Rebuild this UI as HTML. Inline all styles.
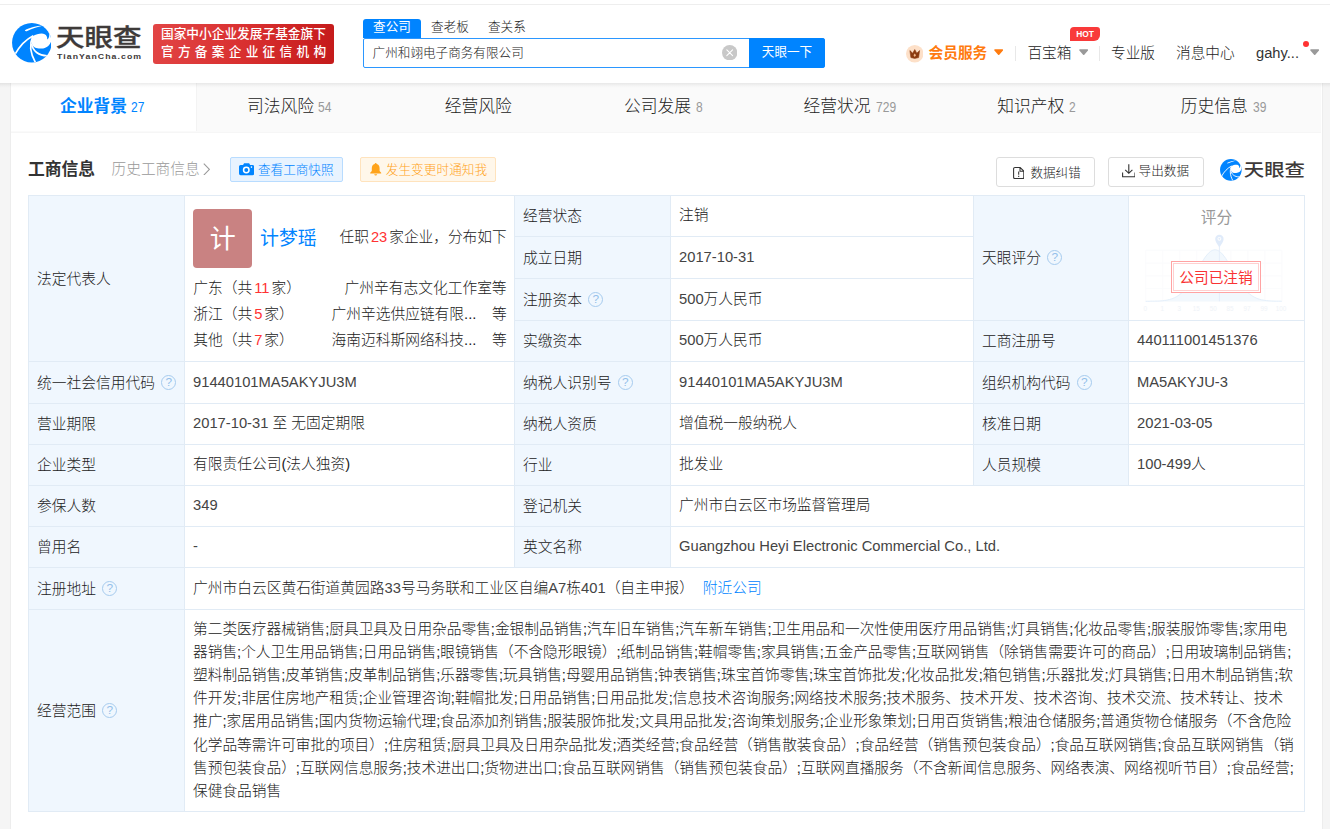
<!DOCTYPE html>
<html lang="zh-CN">
<head>
<meta charset="utf-8">
<title>广州和翊电子商务有限公司 - 天眼查</title>
<style>
*{box-sizing:border-box;margin:0;padding:0}
html,body{width:1330px;height:829px;overflow:hidden;background:#f5f5f5}
body{font-family:"Liberation Sans","Noto Sans CJK SC",sans-serif;font-size:14.68px;font-weight:300;color:#222;position:relative}
.abs{position:absolute}
/* header */
#topline{left:0;top:0;width:1330px;height:4px;background:#fff}
#topline2{left:0;top:4px;width:1330px;height:1px;background:#eee}
#header{left:0;top:5px;width:1330px;height:78px;background:#fff}
#hshadow{left:0;top:83px;width:1330px;height:5px;background:linear-gradient(rgba(0,0,0,.075),rgba(0,0,0,.02) 60%,rgba(0,0,0,0))}
#logo{left:11.6px;top:23.44px;width:39.63px;height:39.63px}
#logotxt{left:56px;top:22.6px;font-size:28px;font-weight:500;-webkit-text-stroke:.4px #3e3a39;color:#3e3a39;line-height:36px;white-space:nowrap;transform-origin:0 0;transform:scale(1.018,.85)}
#logosub{left:57.3px;top:50.6px;font-size:7.6px;font-weight:bold;color:#3e3a39;line-height:12px;letter-spacing:.93px;white-space:nowrap;transform-origin:0 0;transform:scaleX(1.15)}
#banner{left:153px;top:24px;width:181px;height:40px;border-radius:3px;background:linear-gradient(100deg,#e24545 0%,#d93030 50%,#c41a1a 100%);color:#fff;font-weight:500;font-size:12.7px;line-height:18px;padding:.7px 0 0 8px;white-space:nowrap}
#banner .l1{letter-spacing:0;display:block}
#banner .l2{letter-spacing:4.25px;display:block}
.stab{top:18.8px;height:19px;line-height:17.4px;font-size:12.6px;color:#222;white-space:nowrap}
#stab1{left:363px;width:58px;background:#0084ff;color:#fff;font-weight:400;text-align:center;border-radius:3px 3px 0 0}
#sinput{left:363px;top:37.7px;width:462px;height:30.8px;border:1px solid #2b97ff;background:#fff;border-radius:2px}
#sinput .t{position:absolute;left:8.6px;top:0;line-height:28.6px;font-size:12.6px;color:#222;white-space:nowrap}
#sbtn{left:749px;top:37.7px;width:76px;height:30.8px;background:#0084ff;color:#fff;font-weight:400;font-size:12.6px;line-height:29.4px;text-align:center;border-radius:0 3px 3px 0}
#sclear{left:722.1px;top:44.7px;width:15.4px;height:15.4px}
.nav{top:42px;height:22px;line-height:22px;font-size:14.68px;color:#222;white-space:nowrap}
.sep{top:45.6px;width:1px;height:15px;background:#e8e8e8}
#hot{left:1070px;top:26.9px;width:30.1px;height:14.6px;background:#f93a3a;color:#fff;font-size:8.4px;font-weight:bold;line-height:15.2px;text-align:center;border-radius:4px 3px 6px 0}
/* tabs */
#wrap{left:10.2px;top:83px;width:1313.2px;height:746px;background:#fff;border-left:1px solid #ededed;border-right:1px solid #ededed}
#tabs{left:11.2px;top:83px;width:1310.2px;height:49.6px;background:#fafafa;border-bottom:1.6px solid #f6f6f6}
#tab1bg{left:11.2px;top:83px;width:186px;height:48px;background:#fff;border-right:1px solid #f3f3f3}
.tl{top:95.2px;height:24px;line-height:24px;font-size:16.78px;color:#222;white-space:nowrap}
.tl.on{color:#0084ff;font-weight:bold}
.tc{top:95px;height:24px;line-height:24px;font-size:14px;color:#999;white-space:nowrap;transform:scaleX(.86);transform-origin:0 0}
.tc.on{color:#0084ff}
/* section head */
#sh1{left:28px;top:158.2px;font-size:16.78px;font-weight:bold;color:#333;line-height:24px;white-space:nowrap}
#sh2{left:111.6px;top:157.7px;font-size:14.68px;color:#999;line-height:22px;white-space:nowrap}
.btn{height:24.3px;line-height:22.6px;font-size:12.6px;border:1px solid;border-radius:2px;white-space:nowrap;text-align:left}
#b1{left:230.2px;top:157.3px;width:112.4px;color:#0084ff;border-color:#b8dcff;background:#e8f3ff}
#b2{left:360.3px;top:157.3px;width:135.7px;color:#ffa31a;border-color:#ffe3bd;background:#fff7ea}
#b3{left:996px;top:157px;width:99px;height:29.8px;line-height:28.6px;color:#222;border-color:#ddd;background:#fff;border-radius:3px}
#b4{left:1108px;top:157px;width:95.7px;height:29.8px;line-height:28.6px;color:#222;border-color:#ddd;background:#fff;border-radius:3px}
#wmtxt{left:1243.8px;top:158.6px;font-size:20.4px;font-weight:500;color:#3e3a39;line-height:26px;white-space:nowrap;transform-origin:0 0;transform:scale(1.0,.86)}
/* table */
.c{position:absolute;border:1px solid #e1ebf5;background:#fff;padding:0 8px;white-space:nowrap;overflow:hidden;display:flex;align-items:center;font-size:14.74px;color:#222;line-height:22px}
.c.k{background:#f0f7fe}
.m{display:block;position:relative}
.c:not(.k) .m{top:-.8px}
.c .m.lat{color:#444;top:-.9px}
.lt{color:#444}
.legal{display:block}
.av{position:absolute;left:8.1px;top:12.9px;width:59.1px;height:59px;border-radius:4px;background:#c98282;color:#fff;font-size:26px;font-weight:400;line-height:61px;text-align:center}
.nm{position:absolute;left:75px;top:28.6px;font-size:18.9px;font-weight:400;line-height:28px}
.job{position:absolute;right:7.4px;top:29.6px;font-size:14.68px;line-height:22px}
.n{margin:0 2px}
.ll{position:absolute;left:8.2px;right:7.4px;height:22px;line-height:22px}
.ll .r{position:absolute;right:0;top:0}
.ll .co{position:absolute;left:138.3px;top:0}
b{font-weight:inherit}
.score{display:block;padding:0}
.sct{position:absolute;left:0;right:0;top:10.6px;text-align:center;font-size:15.7px;font-weight:400;color:#999;line-height:22px}
.stamp{position:absolute;left:42.2px;top:65.2px;width:89.7px;height:31.9px;border:1px solid #ffa3a3;background:#fff;padding:1.2px}
.stamp span{display:block;width:100%;height:100%;border:1px solid #ffd0d0;font-weight:400;color:#f93333;font-size:14.68px;line-height:28.6px;text-align:center}
.scope{white-space:nowrap;font-size:14.7px;line-height:23.17px;position:relative;top:-.1px}
.q{display:inline-block;width:15.2px;height:15.2px;border:1.2px solid #a6cbee;border-radius:50%;color:#93bfea;font-size:11.8px;line-height:13.4px;text-align:center;vertical-align:middle;position:relative;top:-1.3px;margin-left:6.2px}
.red{color:#f33}
a{color:#0084ff;text-decoration:none}
</style>
</head>
<body>
<div class="abs" id="topline"></div><div class="abs" id="topline2"></div>
<div class="abs" id="header"></div>
<svg class="abs" id="logo" viewBox="48 45 730 730"><defs><clipPath id="lc"><circle cx="413" cy="410" r="364"/></clipPath></defs>
<circle cx="413" cy="410" r="364" fill="#0084ff"/>
<g clip-path="url(#lc)" fill="#fff" stroke="none">
<path d="M435,285 C500,245 600,225 650,250 C690,270 700,310 696,345 L706,345 C725,320 738,290 733,255 C728,220 712,185 688,158 L760,100 L820,240 L820,375 L772,370 C755,440 690,510 590,515 C540,517 500,510 468,498 C430,470 405,420 410,380 C412,345 420,315 435,285 Z"/>
<path d="M284,180 C370,128 500,96 615,95 C520,118 400,155 328,192 C310,200 290,196 284,180 Z"/>
<g fill="none" stroke="#fff" stroke-width="31"><path d="M105,620 C180,480 300,350 440,278"/><path d="M432,285 C370,420 385,600 478,770"/><path d="M410,430 C430,560 540,650 700,648"/></g>
</g></svg>
<div class="abs" id="logotxt">天眼查</div>
<div class="abs" id="logosub">TianYanCha.com</div>
<div class="abs" id="banner"><span class="l1">国家中小企业发展子基金旗下</span><span class="l2">官方备案企业征信机构</span></div>
<div class="abs stab" id="stab1">查公司</div>
<div class="abs stab" style="left:431px">查老板</div>
<div class="abs stab" style="left:488px">查关系</div>
<div class="abs" id="sinput"><span class="t">广州和翊电子商务有限公司</span></div>
<svg class="abs" id="sclear" viewBox="0 0 16 16"><circle cx="8" cy="8" r="8" fill="#c8c8c8"/><path d="M5 5L11 11M11 5L5 11" stroke="#fff" stroke-width="1.1" stroke-linecap="round"/></svg>
<div class="abs" id="sbtn">天眼一下</div>
<svg class="abs" style="left:905.7px;top:45.1px;width:17.5px;height:17.5px" viewBox="0 0 17.5 17.5"><circle cx="8.75" cy="8.75" r="8.75" fill="#fde0c8"/><path d="M3.9 5.6L6.7 8.2L8.75 4.6L10.8 8.2L13.6 5.6L12.6 12.6Q8.75 14.2 4.9 12.6Z" fill="#8b3a10" stroke="#8b3a10" stroke-width=".6" stroke-linejoin="round"/><path d="M8.75 8.6L10 10.3L8.75 12L7.5 10.3Z" fill="#f3b98c"/></svg>
<div class="abs nav" style="left:928.6px;color:#ff7b0f;font-weight:bold">会员服务</div>
<svg class="abs" style="left:994.1px;top:49.2px;width:9.4px;height:6.2px" viewBox="0 0 9.4 6.2"><path d="M1 1H8.4L4.7 5.2Z" fill="#ff7b0f" stroke="#ff7b0f" stroke-width="1.6" stroke-linejoin="round"/></svg>
<div class="abs sep" style="left:1015px"></div>
<div class="abs nav" style="left:1027.4px">百宝箱</div>
<svg class="abs" style="left:1078.7px;top:49.2px;width:9.4px;height:6.2px" viewBox="0 0 9.4 6.2"><path d="M1 1H8.4L4.7 5.2Z" fill="#999" stroke="#999" stroke-width="1.6" stroke-linejoin="round"/></svg>
<div class="abs" id="hot">HOT</div>
<div class="abs sep" style="left:1099px"></div>
<div class="abs nav" style="left:1111px">专业版</div>
<div class="abs nav" style="left:1176px">消息中心</div>
<div class="abs nav" style="left:1256px;color:#333">gahy...</div>
<div class="abs" style="left:1302.8px;top:40.8px;width:6.2px;height:6.2px;border-radius:50%;background:#f33"></div>
<svg class="abs" style="left:1309.5px;top:49.2px;width:9.4px;height:6.2px" viewBox="0 0 9.4 6.2"><path d="M1 1H8.4L4.7 5.2Z" fill="#999" stroke="#999" stroke-width="1.6" stroke-linejoin="round"/></svg>
<div class="abs" id="wrap"></div>
<div class="abs" id="tabs"></div>
<div class="abs" id="tab1bg"></div>
<div class="abs tl on" style="left:59.9px">企业背景</div><div class="abs tc on" style="left:131.3px">27</div>
<div class="abs tl" style="left:246.9px">司法风险</div><div class="abs tc" style="left:317.9px">54</div>
<div class="abs tl" style="left:444.7px">经营风险</div>
<div class="abs tl" style="left:623.9px">公司发展</div><div class="abs tc" style="left:695.6px">8</div>
<div class="abs tl" style="left:803.5px">经营状况</div><div class="abs tc" style="left:875.6px">729</div>
<div class="abs tl" style="left:997.2px">知识产权</div><div class="abs tc" style="left:1069.4px">2</div>
<div class="abs tl" style="left:1180.7px">历史信息</div><div class="abs tc" style="left:1252.9px">39</div>
<div class="abs" id="sh1">工商信息</div>
<div class="abs" id="sh2">历史工商信息</div>
<svg class="abs" style="left:203px;top:162.6px;width:7.4px;height:12.8px" viewBox="0 0 7.4 12.8"><path d="M.8 .7L6.4 6.4L.8 12.1" fill="none" stroke="#999" stroke-width="1.1"/></svg>
<div class="abs btn" id="b1"><svg viewBox="0 0 15 12" style="position:absolute;left:8px;top:5.2px;width:15.2px;height:12.2px"><path d="M1.6 1.9H4L5 .3H10L11 1.9H13.4Q15 1.9 15 3.5V10.4Q15 12 13.4 12H1.6Q0 12 0 10.4V3.5Q0 1.9 1.6 1.9Z" fill="#0084ff"/><circle cx="7.2" cy="6.8" r="2.7" fill="none" stroke="#fff" stroke-width="1.5"/><circle cx="12.3" cy="4" r=".8" fill="#fff"/></svg><span style="position:absolute;left:26.8px;top:.6px">查看工商快照</span></div>
<div class="abs btn" id="b2"><svg viewBox="0 0 11.4 12.6" style="position:absolute;left:9px;top:4.7px;width:11.4px;height:12.6px"><path d="M5.7 0Q6.6 0 6.7 1Q9.6 1.8 9.6 5.2V8L11.2 9.8V10.4H.2V9.8L1.8 8V5.2Q1.8 1.8 4.7 1Q4.8 0 5.7 0Z" fill="#ffa31a"/><path d="M4.2 11.2H7.2Q7 12.6 5.7 12.6Q4.4 12.6 4.2 11.2Z" fill="#ffa31a"/></svg><span style="position:absolute;left:24.4px;top:.6px;letter-spacing:.1px">发生变更时通知我</span></div>
<div class="abs btn" id="b3"><svg viewBox="0 0 11.4 12.2" style="position:absolute;left:15.6px;top:8.7px;width:11.4px;height:12.2px"><path d="M2 .6H7.2L10.8 4V10.6Q10.8 11.6 9.8 11.6H2Q.6 11.6 .6 10.6V1.8Q.6 .6 2 .6Z M7 .8V4.2H10.6" fill="none" stroke="#333" stroke-width="1.05"/><path d="M5.7 4.6V7.8M5.7 8.8V9.9" stroke="#333" stroke-width="1.05"/></svg><span style="position:absolute;left:33.4px;top:.7px">数据纠错</span></div>
<div class="abs btn" id="b4"><svg viewBox="0 0 13.6 13.4" style="position:absolute;left:12.6px;top:6.2px;width:13.6px;height:13.4px"><path d="M6.8 .3V9.2M3.2 5.8L6.8 9.3L10.4 5.8M.6 8.4V12.7H13V8.4" fill="none" stroke="#333" stroke-width="1.1"/></svg><span style="position:absolute;left:29.6px;top:-1px">导出数据</span></div>
<svg class="abs" style="left:1220.2px;top:158.9px;width:21.7px;height:21.7px" viewBox="48 45 730 730"><defs><clipPath id="lc2"><circle cx="413" cy="410" r="364"/></clipPath></defs><circle cx="413" cy="410" r="364" fill="#0084ff"/>
<g clip-path="url(#lc2)" fill="#fff" stroke="none">
<path d="M435,285 C500,245 600,225 650,250 C690,270 700,310 696,345 L706,345 C725,320 738,290 733,255 C728,220 712,185 688,158 L760,100 L820,240 L820,375 L772,370 C755,440 690,510 590,515 C540,517 500,510 468,498 C430,470 405,420 410,380 C412,345 420,315 435,285 Z"/>
<path d="M284,180 C370,128 500,96 615,95 C520,118 400,155 328,192 C310,200 290,196 284,180 Z"/>
<g fill="none" stroke="#fff" stroke-width="31"><path d="M105,620 C180,480 300,350 440,278"/><path d="M432,285 C370,420 385,600 478,770"/><path d="M410,430 C430,560 540,650 700,648"/></g>
</g></svg>
<div class="abs" id="wmtxt">天眼查</div>
<div class="c k" style="left:28px;top:195px;width:157px;height:167px;"><span class="m">法定代表人</span></div>
<div class="c legal" style="left:184px;top:195px;width:331px;height:167px;"><div class="av">计</div><a class="nm">计梦瑶</a><span class="job">任职<b class="red n">23</b>家企业，分布如下</span>
<div class="ll" style="top:81.3px"><span>广东（共<b class="red n">11</b>家）</span><span class="r">广州辛有志文化工作室等</span></div>
<div class="ll" style="top:107.3px"><span>浙江（共<b class="red n">5</b>家）</span><span class="co">广州辛选供应链有限...</span><span class="r">等</span></div>
<div class="ll" style="top:133.1px"><span>其他（共<b class="red n">7</b>家）</span><span class="co">海南迈科斯网络科技...</span><span class="r">等</span></div></div>
<div class="c k" style="left:514px;top:195px;width:157px;height:42px;"><span class="m">经营状态</span></div>
<div class="c" style="left:670px;top:195px;width:304px;height:42px;"><span class="m">注销</span></div>
<div class="c k" style="left:514px;top:236px;width:157px;height:43px;"><span class="m">成立日期</span></div>
<div class="c" style="left:670px;top:236px;width:304px;height:43px;"><span class="m lat">2017-10-31</span></div>
<div class="c k" style="left:514px;top:278px;width:157px;height:43px;"><span class="m">注册资本<span class="q">?</span></span></div>
<div class="c" style="left:670px;top:278px;width:304px;height:43px;"><span class="m"><span class="lt">500</span>万人民币</span></div>
<div class="c k" style="left:514px;top:320px;width:157px;height:42px;"><span class="m">实缴资本</span></div>
<div class="c" style="left:670px;top:320px;width:304px;height:42px;"><span class="m"><span class="lt">500</span>万人民币</span></div>
<div class="c k" style="left:973px;top:195px;width:156px;height:126px;"><span class="m">天眼评分<span class="q">?</span></span></div>
<div class="c score" style="left:1128px;top:195px;width:177px;height:126px;"><svg style="position:absolute;left:0;top:0;width:176px;height:124px;opacity:.55" viewBox="0 0 176 124"><path d="M16.7 54.3V105.3M33.7 54.3V105.3M50.7 54.3V105.3M67.7 54.3V105.3M84.8 54.3V105.3M101.8 54.3V105.3M118.8 54.3V105.3M135.8 54.3V105.3M152.8 54.3V105.3M16.7 54.3H152.8M16.7 67.1H152.8M16.7 79.8H152.8M16.7 92.6H152.8M16.7 105.3H152.8" stroke="#f6f8fb" stroke-width=".8" fill="none"/><path d="M16.7 105.3 L18.4 105.3 L20.1 105.3 L21.8 105.2 L23.5 105.2 L25.2 105.2 L26.9 105.1 L28.6 105.1 L30.3 105.0 L32.0 104.9 L33.7 104.7 L35.4 104.5 L37.1 104.3 L38.8 103.9 L40.5 103.5 L42.2 103.0 L43.9 102.4 L45.6 101.7 L47.3 100.8 L49.0 99.8 L50.7 98.5 L52.4 97.1 L54.1 95.5 L55.8 93.6 L57.5 91.6 L59.2 89.3 L60.9 86.8 L62.6 84.2 L64.3 81.4 L66.0 78.4 L67.7 75.4 L69.4 72.4 L71.1 69.4 L72.8 66.5 L74.5 63.7 L76.2 61.2 L77.9 59.0 L79.6 57.1 L81.3 55.6 L83.0 54.5 L84.8 53.9 L86.5 53.8 L88.2 54.2 L89.9 55.0 L91.6 56.3 L93.3 58.0 L95.0 60.1 L96.7 62.5 L98.4 65.2 L100.1 68.0 L101.8 71.0 L103.5 74.0 L105.2 77.0 L106.9 80.0 L108.6 82.9 L110.3 85.6 L112.0 88.2 L113.7 90.5 L115.4 92.7 L117.1 94.7 L118.8 96.4 L120.5 97.9 L122.2 99.2 L123.9 100.4 L125.6 101.3 L127.3 102.1 L129.0 102.8 L130.7 103.3 L132.4 103.8 L134.1 104.1 L135.8 104.4 L137.5 104.6 L139.2 104.8 L140.9 104.9 L142.6 105.0 L144.3 105.1 L146.0 105.2 L147.7 105.2 L149.4 105.2 L151.1 105.2 L152.8 105.3 L152.8 105.3 L16.7 105.3Z" fill="#e8f3fd" stroke="none"/><path d="M16.7 105.3 L18.4 105.3 L20.1 105.3 L21.8 105.2 L23.5 105.2 L25.2 105.2 L26.9 105.1 L28.6 105.1 L30.3 105.0 L32.0 104.9 L33.7 104.7 L35.4 104.5 L37.1 104.3 L38.8 103.9 L40.5 103.5 L42.2 103.0 L43.9 102.4 L45.6 101.7 L47.3 100.8 L49.0 99.8 L50.7 98.5 L52.4 97.1 L54.1 95.5 L55.8 93.6 L57.5 91.6 L59.2 89.3 L60.9 86.8 L62.6 84.2 L64.3 81.4 L66.0 78.4 L67.7 75.4 L69.4 72.4 L71.1 69.4 L72.8 66.5 L74.5 63.7 L76.2 61.2 L77.9 59.0 L79.6 57.1 L81.3 55.6 L83.0 54.5 L84.8 53.9 L86.5 53.8 L88.2 54.2 L89.9 55.0 L91.6 56.3 L93.3 58.0 L95.0 60.1 L96.7 62.5 L98.4 65.2 L100.1 68.0 L101.8 71.0 L103.5 74.0 L105.2 77.0 L106.9 80.0 L108.6 82.9 L110.3 85.6 L112.0 88.2 L113.7 90.5 L115.4 92.7 L117.1 94.7 L118.8 96.4 L120.5 97.9 L122.2 99.2 L123.9 100.4 L125.6 101.3 L127.3 102.1 L129.0 102.8 L130.7 103.3 L132.4 103.8 L134.1 104.1 L135.8 104.4 L137.5 104.6 L139.2 104.8 L140.9 104.9 L142.6 105.0 L144.3 105.1 L146.0 105.2 L147.7 105.2 L149.4 105.2 L151.1 105.2 L152.8 105.3" fill="none" stroke="#cfe3f7" stroke-width="1"/><path d="M90.4 50V105.3" stroke="#cfe0f5" stroke-width="1"/><path d="M90.4 51.5C87.9 47.5 86.2 45.5 86.2 43A4.2 4.2 0 1 1 94.6 43C94.6 45.5 92.9 47.5 90.4 51.5Z" fill="#c8dcf7"/><circle cx="90.4" cy="42.8" r="1.9" fill="#fff"/><circle cx="90.4" cy="42.8" r="1" fill="#c8dcf7"/><text x="16.3" y="114.6" font-size="6.3" fill="#e3eaf2" text-anchor="middle" font-family="Liberation Sans,sans-serif">0</text><text x="33.3" y="114.6" font-size="6.3" fill="#e3eaf2" text-anchor="middle" font-family="Liberation Sans,sans-serif">1</text><text x="50.2" y="114.6" font-size="6.3" fill="#e3eaf2" text-anchor="middle" font-family="Liberation Sans,sans-serif">3</text><text x="67.2" y="114.6" font-size="6.3" fill="#e3eaf2" text-anchor="middle" font-family="Liberation Sans,sans-serif">15</text><text x="84.2" y="114.6" font-size="6.3" fill="#e3eaf2" text-anchor="middle" font-family="Liberation Sans,sans-serif">50</text><text x="101.1" y="114.6" font-size="6.3" fill="#e3eaf2" text-anchor="middle" font-family="Liberation Sans,sans-serif">85</text><text x="118.1" y="114.6" font-size="6.3" fill="#e3eaf2" text-anchor="middle" font-family="Liberation Sans,sans-serif">97</text><text x="135.0" y="114.6" font-size="6.3" fill="#e3eaf2" text-anchor="middle" font-family="Liberation Sans,sans-serif">99</text><text x="152.0" y="114.6" font-size="6.3" fill="#e3eaf2" text-anchor="middle" font-family="Liberation Sans,sans-serif">100</text></svg><div class="sct">评分</div><div class="stamp"><span>公司已注销</span></div></div>
<div class="c k" style="left:973px;top:320px;width:156px;height:42px;"><span class="m">工商注册号</span></div>
<div class="c" style="left:1128px;top:320px;width:177px;height:42px;"><span class="m lat">440111001451376</span></div>
<div class="c k" style="left:28px;top:361px;width:157px;height:43px;"><span class="m">统一社会信用代码<span class="q">?</span></span></div>
<div class="c" style="left:184px;top:361px;width:331px;height:43px;"><span class="m lat">91440101MA5AKYJU3M</span></div>
<div class="c k" style="left:514px;top:361px;width:157px;height:43px;"><span class="m">纳税人识别号<span class="q">?</span></span></div>
<div class="c" style="left:670px;top:361px;width:304px;height:43px;"><span class="m lat">91440101MA5AKYJU3M</span></div>
<div class="c k" style="left:973px;top:361px;width:156px;height:43px;"><span class="m">组织机构代码<span class="q">?</span></span></div>
<div class="c" style="left:1128px;top:361px;width:177px;height:43px;"><span class="m lat">MA5AKYJU-3</span></div>
<div class="c k" style="left:28px;top:403px;width:157px;height:42px;"><span class="m">营业期限</span></div>
<div class="c" style="left:184px;top:403px;width:331px;height:42px;"><span class="m"><span class="lt">2017-10-31</span> 至 无固定期限</span></div>
<div class="c k" style="left:514px;top:403px;width:157px;height:42px;"><span class="m">纳税人资质</span></div>
<div class="c" style="left:670px;top:403px;width:304px;height:42px;"><span class="m">增值税一般纳税人</span></div>
<div class="c k" style="left:973px;top:403px;width:156px;height:42px;"><span class="m">核准日期</span></div>
<div class="c" style="left:1128px;top:403px;width:177px;height:42px;"><span class="m lat">2021-03-05</span></div>
<div class="c k" style="left:28px;top:444px;width:157px;height:42px;"><span class="m">企业类型</span></div>
<div class="c" style="left:184px;top:444px;width:331px;height:42px;"><span class="m">有限责任公司(法人独资)</span></div>
<div class="c k" style="left:514px;top:444px;width:157px;height:42px;"><span class="m">行业</span></div>
<div class="c" style="left:670px;top:444px;width:304px;height:42px;"><span class="m">批发业</span></div>
<div class="c k" style="left:973px;top:444px;width:156px;height:42px;"><span class="m">人员规模</span></div>
<div class="c" style="left:1128px;top:444px;width:177px;height:42px;"><span class="m"><span class="lt">100-499</span>人</span></div>
<div class="c k" style="left:28px;top:485px;width:157px;height:42px;"><span class="m">参保人数</span></div>
<div class="c" style="left:184px;top:485px;width:331px;height:42px;"><span class="m lat">349</span></div>
<div class="c k" style="left:514px;top:485px;width:157px;height:42px;"><span class="m">登记机关</span></div>
<div class="c" style="left:670px;top:485px;width:635px;height:42px;"><span class="m">广州市白云区市场监督管理局</span></div>
<div class="c k" style="left:28px;top:526px;width:157px;height:42px;"><span class="m">曾用名</span></div>
<div class="c" style="left:184px;top:526px;width:331px;height:42px;"><span class="m lat">-</span></div>
<div class="c k" style="left:514px;top:526px;width:157px;height:42px;"><span class="m">英文名称</span></div>
<div class="c" style="left:670px;top:526px;width:635px;height:42px;"><span class="m lat">Guangzhou Heyi Electronic Commercial Co., Ltd.</span></div>
<div class="c k" style="left:28px;top:567px;width:157px;height:43px;"><span class="m">注册地址<span class="q">?</span></span></div>
<div class="c" style="left:184px;top:567px;width:1121px;height:43px;"><span class="m">广州市白云区黄石街道黄园路<span class="lt">33</span>号马务联和工业区自编<span class="lt">A7</span>栋<span class="lt">401</span>（自主申报）<a style="margin-left:8.8px">附近公司</a></span></div>
<div class="c k" style="left:28px;top:609px;width:157px;height:203px;"><span class="m">经营范围<span class="q">?</span></span></div>
<div class="c" style="left:184px;top:609px;width:1121px;height:203px;"><div class="scope">第二类医疗器械销售;厨具卫具及日用杂品零售;金银制品销售;汽车旧车销售;汽车新车销售;卫生用品和一次性使用医疗用品销售;灯具销售;化妆品零售;服装服饰零售;家用电<br>器销售;个人卫生用品销售;日用品销售;眼镜销售（不含隐形眼镜）;纸制品销售;鞋帽零售;家具销售;五金产品零售;互联网销售（除销售需要许可的商品）;日用玻璃制品销售;<br>塑料制品销售;皮革销售;皮革制品销售;乐器零售;玩具销售;母婴用品销售;钟表销售;珠宝首饰零售;珠宝首饰批发;化妆品批发;箱包销售;乐器批发;灯具销售;日用木制品销售;软<br>件开发;非居住房地产租赁;企业管理咨询;鞋帽批发;日用品销售;日用品批发;信息技术咨询服务;网络技术服务;技术服务、技术开发、技术咨询、技术交流、技术转让、技术<br>推广;家居用品销售;国内货物运输代理;食品添加剂销售;服装服饰批发;文具用品批发;咨询策划服务;企业形象策划;日用百货销售;粮油仓储服务;普通货物仓储服务（不含危险<br>化学品等需许可审批的项目）;住房租赁;厨具卫具及日用杂品批发;酒类经营;食品经营（销售散装食品）;食品经营（销售预包装食品）;食品互联网销售;食品互联网销售（销<br>售预包装食品）;互联网信息服务;技术进出口;货物进出口;食品互联网销售（销售预包装食品）;互联网直播服务（不含新闻信息服务、网络表演、网络视听节目）;食品经营;<br>保健食品销售</div></div>
<div class="abs" id="hshadow"></div>
</body>
</html>
